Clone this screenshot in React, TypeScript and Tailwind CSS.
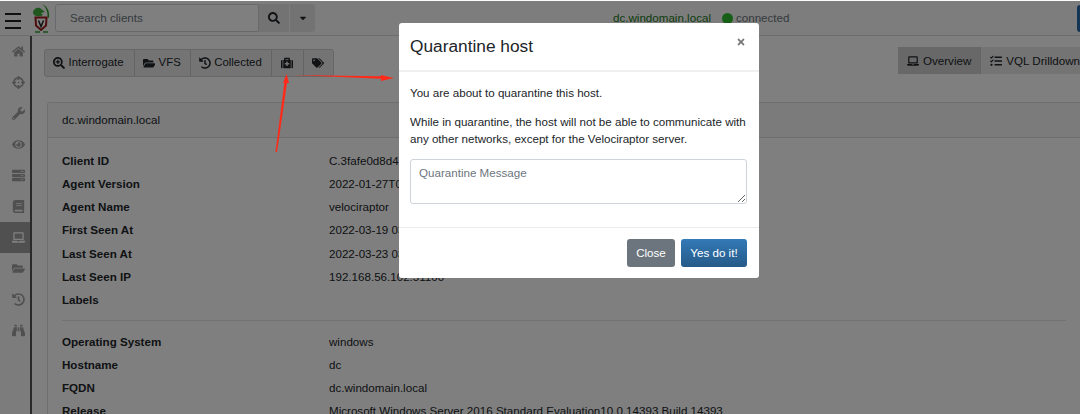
import React from 'react';
import {
  FaBinoculars,
  FaBook,
  FaCaretDown,
  FaCrosshairs,
  FaEye,
  FaFolderOpen,
  FaHistory,
  FaHome,
  FaLaptop,
  FaMedkit,
  FaSearch,
  FaSearchPlus,
  FaServer,
  FaTags,
  FaTasks,
  FaTimes,
  FaWrench,
} from 'react-icons/fa';

const sideIcons = [
  { icon: FaHome },
  { icon: FaCrosshairs },
  { icon: FaWrench },
  { icon: FaEye },
  { icon: FaServer },
  { icon: FaBook },
  { icon: FaLaptop, active: true },
  { icon: FaFolderOpen },
  { icon: FaHistory },
  { icon: FaBinoculars },
];

const clientRows = [
  ['Client ID', 'C.3fafe0d8d4'],
  ['Agent Version', '2022-01-27T0'],
  ['Agent Name', 'velociraptor'],
  ['First Seen At', '2022-03-19 03:12:45 UTC'],
  ['Last Seen At', '2022-03-23 03:41:08 UTC'],
  ['Last Seen IP', '192.168.56.102:51100'],
  ['Labels', ''],
];

const osRows = [
  ['Operating System', 'windows'],
  ['Hostname', 'dc'],
  ['FQDN', 'dc.windomain.local'],
  ['Release', 'Microsoft Windows Server 2016 Standard Evaluation10.0.14393 Build 14393'],
];

function Logo() {
  return (
    <svg width="17" height="29" viewBox="0 0 17 29" className="shrink-0">
      <path d="M9 0c5 2 8 7 7 14l-1.500-.5C15 8 13 3 9 0z" fill="#2e9e2e" />
      <path d="M0 9c0-4 4-6 7-5l5 4-4 1 2 2c-3 2-9 2-10-2z" fill="#3fae3f" />
      <path d="M2.500 13.500h11l-.5 8-5 4.500-5-4.500z" fill="#fff" stroke="#9c1c1c" strokeWidth="2" />
      <path d="M5.500 16.500l2.500 6 2.500-6" fill="none" stroke="#222" strokeWidth="1.500" />
      <path d="M2 28h5M10 28h5" stroke="#2e9e2e" strokeWidth="1.500" />
    </svg>
  );
}

function Toolbutton({
  children,
  active,
  className,
}: {
  children: React.ReactNode;
  active?: boolean;
  className: string;
}) {
  return (
    <div
      className={`flex h-full items-center border-r border-[#c8c8c8] last:border-r-0 ${className} ${
        active ? 'bg-[#d0d0d0]' : ''
      }`}
    >
      {children}
    </div>
  );
}

function InfoRow({ label, value }: { label: string; value: string }) {
  return (
    <div className="flex h-[23.17px] items-center">
      <b className="w-[267px] shrink-0 font-bold text-[#212529]">{label}</b>
      <span className="whitespace-nowrap text-[#212529]">{value}</span>
    </div>
  );
}

export default function App() {
  return (
    <div className="relative h-[414px] w-[1080px] overflow-hidden bg-white font-['Liberation_Sans',Arial,sans-serif] text-[11.6px] text-[#212529]">
      {/* page underneath the dialog */}
      <header className="flex h-[36px] items-center border-b border-[#d8d8d8] bg-[#fbfbfb] pt-[1px]">
        <div className="ml-[5px] mt-[6px] flex w-[16px] flex-col gap-[5.500px]">
          <span className="h-[1.500px] bg-[#222]" />
          <span className="h-[1.500px] bg-[#222]" />
          <span className="h-[1.500px] bg-[#222]" />
        </div>
        <div className="ml-[12px] mt-[1px]">
          <Logo />
        </div>
        <div className="ml-[5px] flex h-[28px] w-[204px] items-center rounded-l-[3px] border border-[#ced4da] bg-white pl-[14px] text-[#6c757d]">
          Search clients
        </div>
        <div className="flex h-[28px] w-[30px] items-center justify-center bg-[#e6e6e6] text-[12px] text-[#212529]">
          <FaSearch />
        </div>
        <div className="ml-[1px] flex h-[28px] w-[25px] items-center justify-center rounded-r-[3px] bg-[#e6e6e6] text-[10px]">
          <FaCaretDown />
        </div>
        <div className="ml-[298px] whitespace-nowrap text-[#1a7a1a]">dc.windomain.local</div>
        <span className="ml-[11px] h-[11px] w-[11px] rounded-full bg-[#2fbf2f]" />
        <div className="ml-[3px] whitespace-nowrap text-[#6c757d]">connected</div>
        <div className="ml-auto h-[27px] w-[3px] rounded-l-[3px] bg-[#2a6aa8]" />
      </header>

      <div className="flex h-[378px]">
        <nav className="flex w-[32px] shrink-0 flex-col border-r-[2px] border-[#555] bg-[#f8f8f8] text-[13px] text-[#a0a0a0]">
          {sideIcons.map(({ icon: Icon, active }, i) => (
            <div
              key={i}
              className={`flex h-[31px] items-center justify-center pl-[7px] ${active ? 'bg-[#a0a0a0] text-white' : ''}`}
            >
              <Icon />
            </div>
          ))}
        </nav>

        <main className="min-w-0 flex-1 pl-[12px]">
          <div className="flex h-[66px] items-start justify-between pt-[13px]">
            <div className="flex h-[28px] rounded-[3px] border border-[#cfcfcf] bg-[#e8e8e8] text-[11.400px] text-[#212529]">
              <Toolbutton className="gap-[3.500px] pl-[8px] pr-[10px]">
                <FaSearchPlus className="text-[12px]" />
                <span>Interrogate</span>
              </Toolbutton>
              <Toolbutton className="gap-[3.500px] pl-[8px] pr-[9px]">
                <FaFolderOpen className="text-[12.500px]" />
                <span>VFS</span>
              </Toolbutton>
              <Toolbutton className="gap-[3.500px] pl-[8px] pr-[9px]">
                <FaHistory className="text-[12px]" />
                <span>Collected</span>
              </Toolbutton>
              <Toolbutton className="px-[9.500px]">
                <FaMedkit className="text-[12px]" />
              </Toolbutton>
              <Toolbutton className="px-[8.500px]">
                <FaTags className="text-[12px]" />
              </Toolbutton>
            </div>
            <div className="-mr-[9px] -mt-[2px] flex h-[27px] rounded-[3px] bg-[#e8e8e8] text-[#212529]">
              <Toolbutton active className="gap-[4px] px-[9px]">
                <FaLaptop className="text-[12px]" />
                <span>Overview</span>
              </Toolbutton>
              <Toolbutton className="gap-[4px] px-[9px]">
                <FaTasks className="text-[12px]" />
                <span className="whitespace-nowrap">VQL Drilldown</span>
              </Toolbutton>
            </div>
          </div>

          <section className="ml-[3px] rounded-l-[3px] border border-r-0 border-[#dcdcdc]">
            <div className="flex h-[35px] items-center border-b border-[#dcdcdc] bg-[#f7f7f7] pl-[14px]">
              dc.windomain.local
            </div>
            <div className="px-[14px] pt-[11px]">
              {clientRows.map(([label, value]) => (
                <InfoRow key={label} label={label} value={value} />
              ))}
              <div className="my-[9px] border-t border-[#e5e5e5]" />
              {osRows.map(([label, value]) => (
                <InfoRow key={label} label={label} value={value} />
              ))}
            </div>
          </section>
        </main>
      </div>

      {/* modal backdrop */}
      <div className="absolute inset-x-0 bottom-0 top-[1px] bg-black/50" />

      {/* red annotation arrows */}
      <svg className="absolute left-0 top-0" width="400" height="160" viewBox="0 0 400 160">
        <path d="M275.500 152 L284.300 83 L283 83 L286.500 74 L289 83 L287 83 L277 152z" fill="#ff2a1a" />
        <path d="M292 75 L381 76.300 L381 75 L394 78 L381 81 L381 78.700z" fill="#ff2a1a" />
      </svg>

      {/* dialog */}
      <div className="absolute left-[399px] top-[23px] flex h-[255px] w-[360px] flex-col rounded-[3px] bg-white">
        <div className="relative flex h-[49px] shrink-0 items-center border-b-[2px] border-[#eef0f2] pl-[11px] pt-[1px] text-[17.300px] text-[#212529]">
          Quarantine host
          <FaTimes className="absolute right-[13px] top-[14px] text-[10px] text-[#777]" />
        </div>
        <div className="flex-1 pl-[11px] pr-[12px] pt-[12px] leading-[17.500px] text-[#212529]">
          <p>You are about to quarantine this host.</p>
          <p className="mt-[11px]">
            While in quarantine, the host will not be able to communicate with any other networks, except for the
            Velociraptor server.
          </p>
          <textarea
            readOnly
            placeholder="Quarantine Message"
            className="mt-[11px] block h-[45px] w-full rounded-[3px] border border-[#ced4da] px-[8px] py-[4px] text-[11.600px] placeholder:text-[#6c757d]"
          />
        </div>
        <div className="flex h-[51px] shrink-0 items-center justify-end gap-[6px] border-t border-[#e9ecef] pr-[12px] text-[#fff]">
          <button type="button" className="h-[28px] w-[48px] rounded-[3px] bg-[#6c757d]">
            Close
          </button>
          <button
            type="button"
            className="h-[28px] w-[66px] rounded-[3px] bg-gradient-to-b from-[#337ab7] to-[#265a88]"
          >
            Yes do it!
          </button>
        </div>
      </div>
    </div>
  );
}
